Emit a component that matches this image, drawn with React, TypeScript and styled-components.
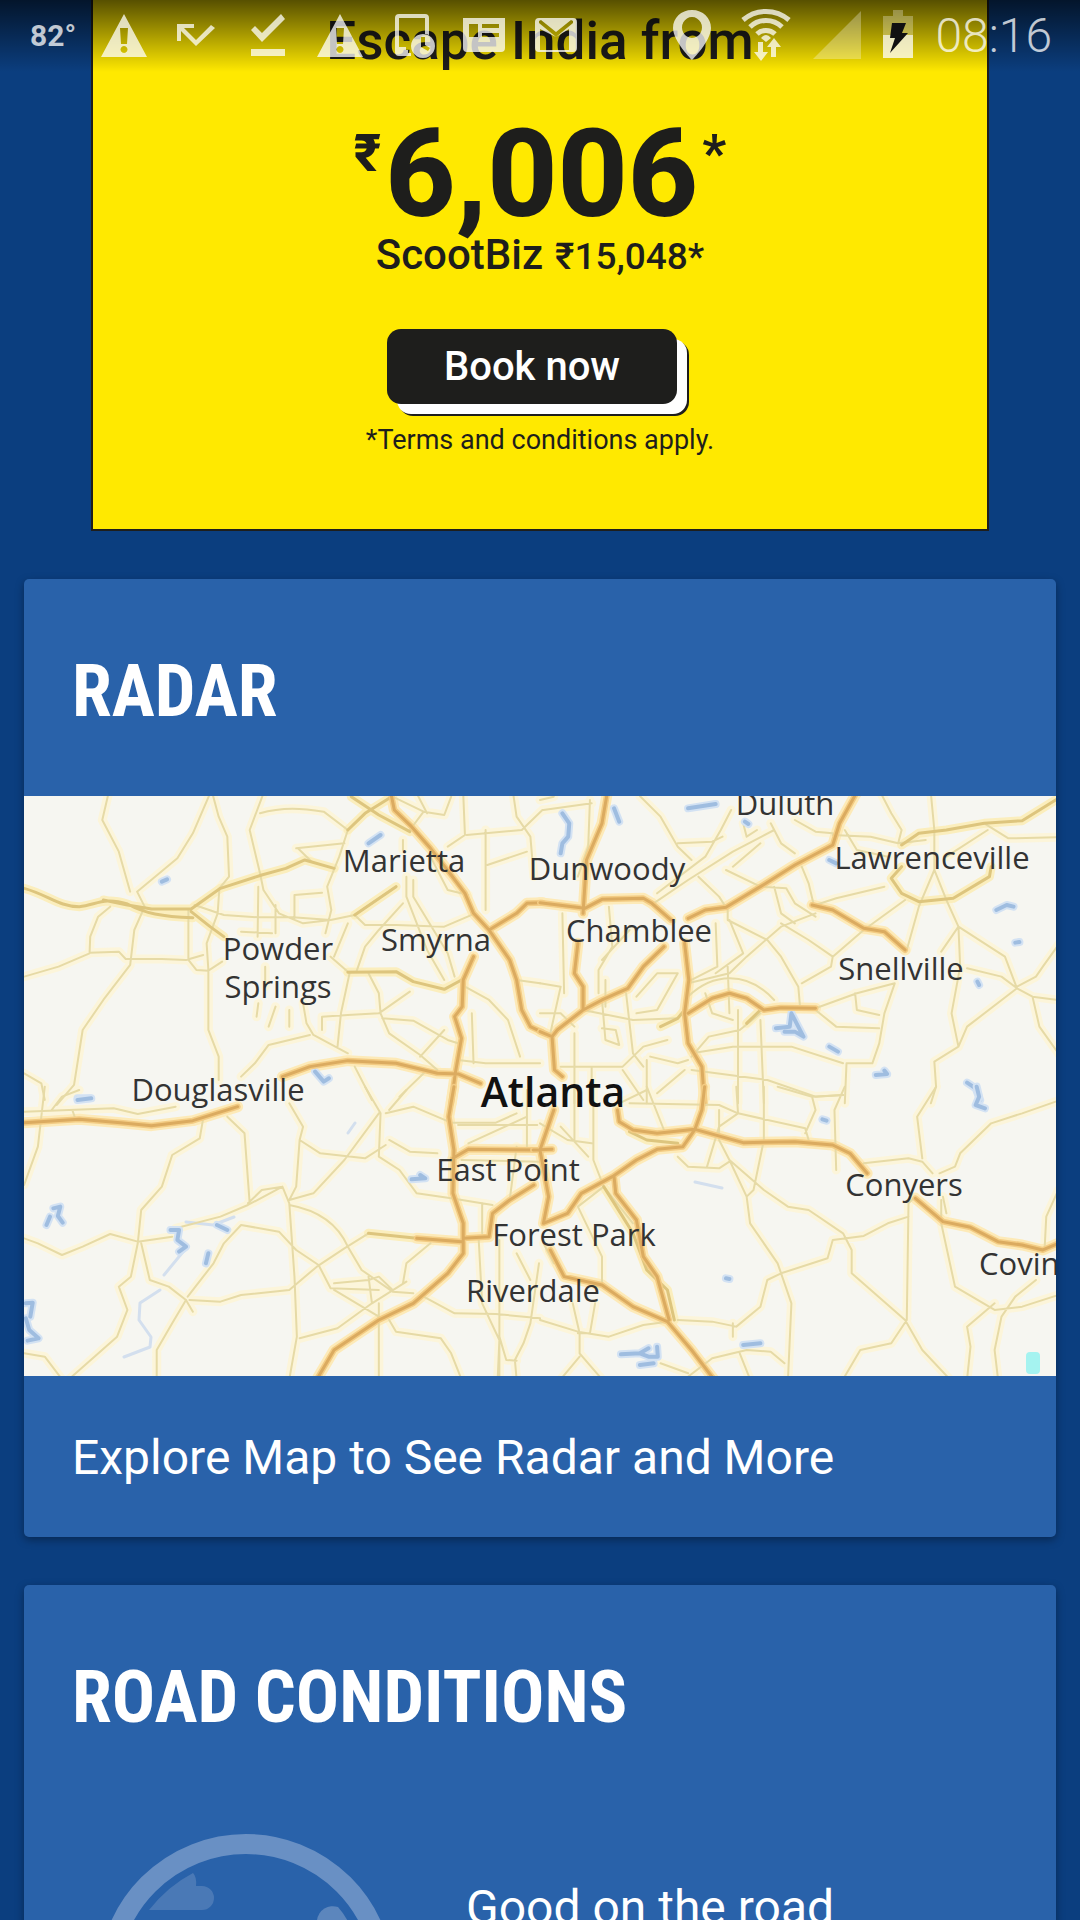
import React from "react";
import styled, { createGlobalStyle } from "styled-components";

const GlobalStyle = createGlobalStyle`
  * { box-sizing: border-box; }
  body { margin: 0; background: #0b3e7f; }
`;

const ink = "#1e1e1c";

const Screen = styled.div`
  position: relative;
  height: 100vh;
  overflow: hidden;
  background: #0b3e7f;
  font-family: Roboto, "Noto Sans", sans-serif;
  color: #fff;
`;

const StatusBar = styled.header`
  position: absolute;
  inset: 0 0 auto 0;
  z-index: 2;
  height: 72px;
  padding: 0 28px 0 30px;
  display: flex;
  justify-content: space-between;
  align-items: flex-start;
  background: linear-gradient(rgba(0, 0, 0, 0.66), rgba(0, 0, 0, 0));
  color: rgba(255, 255, 255, 0.75);
`;

const StatusGroup = styled.div<{ $gap: number }>`
  display: flex;
  align-items: center;
  gap: ${(p) => p.$gap}px;
  height: 72px;
`;

const Temperature = styled.span`
  width: 46px;
  font-size: 30px;
  font-weight: 700;
  line-height: 72px;
`;

const Clock = styled.time`
  font-size: 48px;
  font-weight: 300;
  line-height: 72px;
`;

const StatusIcon = styled.svg`
  display: block;
  flex: none;
  height: 72px;
  fill: currentColor;
`;

const Feed = styled.main`
  display: flex;
  flex-direction: column;
  gap: 48px;
  padding: 0 24px;
`;

const Ad = styled.section`
  align-self: center;
  width: 87%;
  padding: 9px 0 73px;
  display: flex;
  flex-direction: column;
  align-items: center;
  background: #ffe900;
  border: 2px solid ${ink};
  border-top: 0;
  color: ${ink};
`;

const AdHeadline = styled.p`
  margin: 0 0 44px;
  font-size: 53px;
  font-weight: 500;
  line-height: 64px;
`;

const Price = styled.p`
  margin: 0;
  display: flex;
  align-items: flex-start;
  gap: 4px;
  font-size: 122px;
  font-weight: 800;
  line-height: 116px;
`;

const PriceMark = styled.span`
  font-size: 52px;
  line-height: 74px;
`;

const BizFare = styled.p`
  margin: 0 0 50px;
  display: flex;
  align-items: baseline;
  gap: 12px;
  font-size: 42px;
  font-weight: 500;
  line-height: 44px;
`;

const BizPrice = styled.span`
  font-size: 37px;
`;

const BookButton = styled.button`
  width: 290px;
  height: 75px;
  margin: 0 16px 20px 0;
  border: 0;
  border-radius: 14px;
  background: ${ink};
  box-shadow: 10px 10px 0 #fff, 12px 12px 0 ${ink};
  color: #fff;
  font: 500 40px Roboto, sans-serif;
`;

const Terms = styled.p`
  margin: 0;
  font-size: 27px;
  line-height: 32px;
`;

const Card = styled.section`
  border-radius: 5px;
  overflow: hidden;
  background: #2962aa;
  box-shadow: 0 3px 8px rgba(0, 0, 0, 0.35);
`;

const CardTitle = styled.h2`
  margin: 0;
  padding: 69px 48px 60px;
  font-family: "Roboto Condensed", "Liberation Sans Narrow", "Arial Narrow", Roboto, sans-serif;
  font-size: 72px;
  font-weight: 700;
  line-height: 88px;
`;

const MapSvg = styled.svg`
  display: block;
  width: 100%;
  background: #f6f6f1;
`;

const CardLink = styled.a`
  display: block;
  padding: 54px 48px 51px;
  color: #fff;
  font-size: 48px;
  line-height: 56px;
  text-decoration: none;
`;

const RoadRow = styled.div`
  display: flex;
  align-items: flex-start;
  gap: 72px;
  padding: 32px 48px 48px 74px;
`;

const RoadIcon = styled.svg`
  flex: none;
  width: 296px;
  height: 296px;
`;

const RoadStatus = styled.p`
  margin: 46px 0 0;
  font-size: 48px;
  line-height: 56px;
`;

/* The map is drawn in four quadrants, each with its own local grid. */
type Quadrant = { at: string; minor: string; medium: string; major: string; water: string };

const quadrants: Quadrant[] = [
  {
    at: "translate(-24 -16) scale(.3444 .3333)",
    minor:
      "M315 40L297 120L345 215L378 335M610 40L560 160L515 235L398 335L420 380L390 450L378 555L300 660L240 750L215 915L165 975M618 45L635 110L660 170L665 290L637 325L632 400L600 490L605 570L605 750L635 830L635 900M765 40L725 150L755 280L765 330L810 400L880 430L960 420L1030 405L1150 320M755 100C820 80 880 85 940 95L1010 150L985 230L950 320L962 390L945 460M320 380L285 410L262 470L260 520L170 560L70 590M260 518L345 515L365 537L470 537L540 540L590 525M547 390L547 540L570 570L605 572L645 545M565 375L650 405L750 412L850 412L960 420M750 320L748 470M800 375L800 460M855 415L855 345L935 338M860 205L1000 190M865 205L905 245M1180 290L1180 350L1240 510L1290 600M1200 300L1200 350L1300 520L1320 590M1250 230L1300 330L1360 345M1030 405L1060 435L1150 435L1290 440L1380 400M1170 370L1100 450L1060 500L1035 575L1010 575L960 530M1015 580L990 700L980 800M1070 580L1100 640L1105 700L1130 760L1220 825L1270 870M935 750L935 710L1010 705L1100 700L1190 635M1110 715L1200 722L1300 780L1330 790M880 670L890 730L910 765L1010 820M700 890L740 850L780 795L900 765M1350 620L1420 660L1475 720L1510 830M1370 700L1375 850M1190 150L1230 95L1290 105L1310 50M1345 40L1350 165L1300 200M1355 165L1515 150L1575 90M1490 40L1500 110L1540 170L1550 290M1410 150L1410 390M1415 255L1530 215M1030 860L1080 960M1240 870L1160 950M70 880L120 910L130 960M1220 830L1290 750M1330 840L1410 850L1568 850M1500 600L1568 610M1010 430L970 530M770 560L770 620M800 680L780 740M750 670L745 710M840 690L840 740M700 455L790 460M1140 50L1230 95M1170 180L1170 210M1210 40L1240 100",
    medium:
      "M70 325C140 345 170 380 230 380C280 375 300 350 370 372C420 400 470 410 560 413M300 360L370 375L440 387L555 387L640 325L760 285L830 265L885 240L970 265M555 395L610 440L650 470M1020 50L1100 105L1190 155M1130 55L1060 100L1010 150M1010 577L1150 575L1200 605L1290 628L1340 600M1030 405L1150 320",
    major:
      "M1135 40L1145 90L1195 140L1250 205L1310 285L1350 340L1375 400L1420 450L1480 540L1500 600L1515 690L1540 740L1575 757M1420 450L1500 400L1530 370L1575 368M1375 530L1345 600L1342 680L1320 710L1340 775L1322 880L1310 970M820 890L900 860L1010 842L1150 850L1270 880L1330 882L1395 910",
    water: "M915 875L940 905L955 895M225 955L260 955M1070 190L1105 165M470 305L485 298",
  },
  {
    at: "translate(516 -16) scale(.3444 .3333)",
    minor:
      "M990 40L1020 100L1050 150L1040 190M1135 40L1145 150L1145 270L1100 380L1065 510M1145 270L1180 360L1215 440L1350 530L1385 625L1430 650L1505 660M1385 625L1240 740L1215 800L1145 845L1150 920L1135 970M1505 495L1460 560L1440 590L1385 620M1215 440L1220 560L1195 700L1215 800M1215 440L1165 515M1240 565L1340 590L1385 625M1430 650L1450 740L1505 820M1290 130L1360 175L1505 172M1180 230L1300 150M850 165L960 170L1040 190L1120 180M555 90L525 150L480 230L340 340M680 150L560 215L430 300L330 370M670 130L700 190L740 220M640 190L560 260M540 270L640 320L715 325L740 370L800 410M760 260L780 310L795 375M1060 360L940 450L850 530M545 390L545 420L660 480L700 530L750 620L755 680M550 420L590 520L510 580M800 400L700 440L600 530L550 580L430 610M700 430L780 480L850 530L845 560L760 610M290 48L350 110L400 200L440 240M400 190L500 185L530 170M1000 320L860 355L800 375M460 290L520 350L545 390M800 685L920 640L1030 610L1000 700L985 790L965 850L890 850L885 970M800 690L860 740L985 745M915 640L920 690L985 705M430 650C500 580 600 570 680 660M575 690L575 970M640 720L650 970M440 820L560 800L730 800L880 850M440 870L660 900L800 950L880 945M640 700L580 750L490 770L440 830M0 610L60 620L30 760M65 400L70 640M125 690L270 720L400 715M180 660L190 780L230 795L220 750L180 745M250 640L270 820L300 860M310 840L310 970M320 830L400 850L430 840M200 380L210 500L170 570L170 640M260 450L180 540M280 650L340 580L400 580L340 690L280 700M100 760L100 970M60 860L240 860L300 800L370 780M510 430L515 560L440 600M145 60L140 200L110 290M0 60L40 50M10 90L150 70M630 150L600 170L590 130M740 120L800 155L850 160M885 150L920 210L1010 230M680 320L700 400L740 430M480 640L500 700L560 720M545 560L550 700M190 600L190 680M0 700L60 700L100 740M150 860L150 970M240 870L300 960M340 940L420 870",
    medium:
      "M1050 195L1100 160L1180 150L1290 130L1400 122L1505 55M1310 260L1305 290L1200 355L1100 365L1050 340L1020 295L1050 260M600 730L640 690M350 740L400 715L420 690",
    major:
      "M195 40L180 130L135 240L125 400M0 368L130 385L180 358L300 355L325 370L380 420M430 415L480 390L540 382L640 320L740 255L850 195L870 130L918 40M110 490L100 580L125 620L125 690M360 500L300 560L255 625L180 660L125 690L50 750L35 770L42 870L65 890M0 755L35 770M420 490L432 600L420 700L430 790L470 860L478 970M430 700L500 655L550 640L600 655L650 690L700 683L800 685M790 375L850 390L940 445L1000 455L1060 510",
    water:
      "M65 100L85 130L82 170L65 190L60 220M215 85L230 125M430 85L510 72M685 745L725 740L730 700L745 730L765 770L740 755L710 755M840 800L865 815M1325 390L1355 375L1375 380M975 885L1008 882L1000 872M1240 908L1265 925L1278 960M595 125L605 132M1270 605L1275 615M840 240L860 250M1380 488L1392 486",
  },
  {
    at: "translate(-24 294) scale(.3444 .3333)",
    minor:
      "M130 -10L110 170L70 285M210 60L220 90M70 65L200 60L330 55L400 72L510 50M150 60L180 20L230 0M590 85L580 145L500 195L470 290L410 360L400 460L380 560L345 590L370 660L340 740L200 868M70 445L110 460L180 495L240 470L320 432L400 455L500 440M510 415L640 380L720 345L820 290L840 340L855 560L862 740L840 868M660 80L710 130L725 340M840 40L880 110L870 150L860 290L840 330M870 150L930 190L1060 205L1120 165M1060 -10L1105 70L1100 200L1160 240L1210 310L1310 325L1430 345M1100 70L1000 210L910 310L840 330M1120 70L1200 50L1310 98L1440 98L1500 70M840 345C920 360 980 400 1010 470L1050 540L1140 605L1200 610M410 460L435 570L490 590L540 630L560 665M550 630L640 635L700 615L840 600L920 530L1000 475L1070 430M545 620L620 520L650 460L700 405L810 425L860 480L925 525L960 595L1100 600M540 630L500 700L455 780L455 868M970 580L1070 570L1100 560L1140 600M1170 580L1180 520L1250 460M1100 640L1100 868M970 600L1100 680M1180 575L1080 640L980 715L870 745M1130 690L1150 725L1280 745L1310 790L1340 868M1230 620L1320 670L1440 672L1568 685M1390 450L1400 640L1450 750L1445 868M1450 450L1450 868M1500 490L1540 570M1565 520L1540 700L1520 760L1495 810L1500 868M1450 740L1470 810L1500 812M70 790L130 800L180 868M1130 150L1190 185L1270 190M1130 60L1180 0M1400 340L1400 430M1530 80L1360 160M1500 170L1480 330L1430 380M1330 105L1560 105M1530 0L1530 170M1070 560L1080 640M720 340L760 300L820 290M1340 210L1568 215",
    medium: "M1070 430L1210 445",
    major:
      "M70 98L230 88L350 98L440 107L560 92L690 50M1318 -10L1303 80L1318 180L1315 310L1345 400L1345 490L1300 550L1200 640L1100 690L970 780L920 868M1315 205L1360 178L1575 180M1345 445L1420 440L1430 370L1480 330L1550 285M1210 445L1340 455",
    water:
      "M135 405L145 380M155 355L175 350L168 378L182 398M495 420L520 420L515 450L540 470L520 485M605 490L598 520M75 640L95 638L88 680M75 685L85 720L112 745L80 752M1195 268L1235 265L1220 255M225 30L265 25M630 405L660 420",
  },
  {
    at: "translate(516 294) scale(.3444 .3333)",
    minor:
      "M155 -10L155 210L185 290L270 400M100 -10L100 150M940 220L1070 205L1110 215L1140 250M1150 -10L1095 80L1110 205M1505 32L1400 70L1310 100L1220 190L1205 230L1160 250M885 -10L855 60L860 240M790 20L800 60L770 130M570 -10L575 70L520 110L485 230M650 -10L650 150L620 300L600 320M690 -10L790 20L880 15M260 40L520 45L575 70L770 115L780 150M520 150L550 210L600 320L610 400L690 520L730 640L720 868M550 210L650 300L720 350L780 360L880 430L905 480L905 550L1060 690L1110 780L1190 868M1070 340L1065 690L1020 760L930 780L880 868M1070 380L1010 400L940 438L850 450L835 505L700 550L660 570L640 650L570 710L500 695L400 690M1165 330L1165 400L1205 590L1320 660L1400 650L1505 615M1440 570L1380 620L1340 680L1320 780L1330 868M1320 640L1240 710L1250 770L1240 868M1505 300L1470 380L1465 480M400 200L430 230L520 235L550 215M0 690L110 725L200 740L300 705L370 695M95 640L115 730L115 790L180 868M160 640L145 730L110 730M115 800L60 868M420 868L500 805L600 780L670 785L710 820M580 790L610 868M110 350L185 290M0 100L80 150L150 160M110 350L180 500L180 590M310 -10L360 120M520 60L520 140M1170 320L1180 370M1070 340L1090 320M230 40L310 0M10 460L40 520M350 820L430 850M560 700L560 740M60 110L140 200",
    medium: "M185 290L240 380L270 430L310 540L370 600L390 690M260 125L310 150L400 160",
    major:
      "M225 60L230 95L270 120L340 130L450 118L590 158L740 155L850 165L900 190L950 250M478 -10L470 60L450 118L415 170L340 178L280 210L210 260L120 310L80 370L10 400M1090 325L1170 395L1250 412L1330 455L1400 465L1460 480L1505 460M215 260L220 310L280 390L300 500L340 560L375 690M30 480L70 560L180 585L270 650L370 695L440 780L505 868M40 60L0 180L25 320L10 400M-20 180L35 178",
    water:
      "M1268 -10L1275 20L1265 45L1292 55M235 793L290 790L315 800L342 800L340 770M290 790L315 775M290 825L330 820M820 88L832 92M540 565L550 567M590 765L640 760",
  },
];

/* Narrow creeks, fainter than the lakes. */
const creeks =
  "M163 451L140 479M162 426L189 429L210 421M136 494L116 507L115 524L127 541L126 551L100 561M324 337L331 327M671 386L698 392";

type City = { name: string; x: number; y: number; start?: boolean };

const cities: City[] = [
  { name: "Duluth", x: 761, y: 19 },
  { name: "Marietta", x: 380, y: 76 },
  { name: "Dunwoody", x: 583, y: 84 },
  { name: "Lawrenceville", x: 908, y: 73 },
  { name: "Smyrna", x: 412, y: 155 },
  { name: "Chamblee", x: 615, y: 146 },
  { name: "Powder", x: 254, y: 164 },
  { name: "Springs", x: 254, y: 202 },
  { name: "Snellville", x: 877, y: 184 },
  { name: "Douglasville", x: 194, y: 305 },
  { name: "East Point", x: 484, y: 385 },
  { name: "Conyers", x: 880, y: 400 },
  { name: "Forest Park", x: 550, y: 450 },
  { name: "Riverdale", x: 509, y: 506 },
  { name: "Covin", x: 955, y: 479, start: true },
];

const Road = styled.path<{ $color: string; $width: number }>`
  fill: none;
  stroke: ${(p) => p.$color};
  stroke-width: ${(p) => p.$width}px;
  stroke-linejoin: round;
  stroke-linecap: round;
  vector-effect: non-scaling-stroke;
`;

const CityLabel = styled.text`
  fill: #333;
  font-family: "Open Sans", "Noto Sans", sans-serif;
  font-size: 31px;
`;

const MainCityLabel = styled(CityLabel)`
  fill: #111;
  font-size: 41px;
  font-weight: 600;
`;

function RadarMap() {
  return (
    <MapSvg viewBox="0 0 1032 580" role="img" aria-label="Map of Atlanta">
      {quadrants.map((q) => (
        <g key={q.at} transform={q.at}>
          <Road d={q.minor} $color="#fcf5da" $width={9} />
          <Road d={q.medium} $color="#fbeebd" $width={9} />
          <Road d={q.major} $color="#fdeab8" $width={11} />
        </g>
      ))}
      <Road d={creeks} $color="#d3dfee" $width={3} />
      {quadrants.map((q) => (
        <g key={q.at} transform={q.at}>
          <Road d={q.minor} $color="#e6daa6" $width={2} />
          <Road d={q.water} $color="#d3e2f3" $width={8} />
          <Road d={q.water} $color="#9fbde0" $width={4} />
          <Road d={q.medium} $color="#ddc57e" $width={3} />
          <Road d={q.major} $color="#f3cc84" $width={6} />
          <Road d={q.major} $color="#dbab60" $width={3} />
        </g>
      ))}
      <rect x="1002" y="556" width="14" height="22" rx="4" fill="#a5f3f0" />
      {cities.map((c) => (
        <CityLabel key={c.name} x={c.x} y={c.y} textAnchor={c.start ? "start" : "middle"}>
          {c.name}
        </CityLabel>
      ))}
      <MainCityLabel x="529" y="311" textAnchor="middle">
        Atlanta
      </MainCityLabel>
    </MapSvg>
  );
}

function WarningIcon() {
  return (
    <StatusIcon width="48" viewBox="0 0 48 72">
      <path
        fillRule="evenodd"
        d="M24 14L47 57H1ZM20 28L21 44H27L28 28ZM24 46a3.500 3.500 0 1 0 .01 0Z"
      />
    </StatusIcon>
  );
}

export default function App() {
  return (
    <Screen>
      <GlobalStyle />
      <StatusBar>
        <StatusGroup $gap={24}>
          <Temperature>82°</Temperature>
          <WarningIcon />
          <StatusIcon width="48" viewBox="0 0 48 72">
            <path d="M5 24H22V28H12L24 40L39 25L43 28L24 46L9 31V41H5Z" />
          </StatusIcon>
          <StatusIcon width="48" viewBox="0 0 48 72">
            <path d="M7 30L11 26L18 33L37 14L41 19L18 42ZM7 49H41V56H7Z" />
          </StatusIcon>
          <WarningIcon />
          <StatusIcon width="48" viewBox="0 0 48 72">
            <path
              fillRule="evenodd"
              d="M11 14H37Q41 14 41 18V35A12 12 0 0 0 37 34V18H11V47H18V50H20V53H23V56H11Q7 56 7 52V18Q7 14 11 14Z"
            />
            <path
              fillRule="evenodd"
              d="M35 34A12 12 0 1 1 34.990 34ZM33 37V47L40 51L42 48L37 45V37Z"
            />
          </StatusIcon>
          <StatusIcon width="48" viewBox="0 0 48 72">
            <path
              fillRule="evenodd"
              d="M3 18H45V48Q45 52 41 52H7Q3 52 3 48ZM9 24V37H18V24ZM22 24V28H39V24ZM22 33V37H39V33Z"
            />
          </StatusIcon>
          <StatusIcon width="48" viewBox="0 0 48 72">
            <path
              fillRule="evenodd"
              d="M7 18H41Q45 18 45 22V48Q45 52 41 52H7Q3 52 3 48V22Q3 18 7 18ZM9 20L24 32L39 20L41 21V23L24 37L7 23V21ZM8 29V50H37V29L24 37Z"
            />
          </StatusIcon>
        </StatusGroup>
        <StatusGroup $gap={22}>
          <StatusIcon width="46" viewBox="0 0 46 72">
            <path
              fillRule="evenodd"
              d="M19 10C8 10 0 18 0 28C0 41 19 60 19 60S38 41 38 28C38 18 30 10 19 10ZM19 17a10 10.500 0 1 1-.01 0Z"
            />
          </StatusIcon>
          <StatusIcon width="50" viewBox="0 0 50 72">
            <g fill="none" stroke="currentColor" strokeWidth="5">
              <path d="M2 20A35 35 0 0 1 48 20M9 27A23 23 0 0 1 41 27M16 34A13 13 0 0 1 34 34" />
            </g>
            <path d="M20 38Q25 32 30 38L25 42ZM17 42H22V52H27L20 61L13 52H17ZM33 38L40 47H35V57H30V47H26Z" />
          </StatusIcon>
          <StatusIcon width="48" viewBox="0 0 48 72">
            <path fillOpacity=".38" d="M48 11V59H0Z" />
          </StatusIcon>
          <StatusIcon width="30" viewBox="0 0 30 72">
            <path fillOpacity=".38" d="M10 10H20V16H30V35H0V16H10Z" />
            <path d="M0 35H30V58H0Z" />
            <path fill="#111" d="M9 23H23L19 33H25L7 53L12 38H7Z" />
          </StatusIcon>
          <Clock>08:16</Clock>
        </StatusGroup>
      </StatusBar>

      <Feed>
        <Ad>
          <AdHeadline>Escape India from</AdHeadline>
          <Price>
            <PriceMark>₹</PriceMark>
            6,006
            <PriceMark>*</PriceMark>
          </Price>
          <BizFare>
            ScootBiz <BizPrice>₹15,048*</BizPrice>
          </BizFare>
          <BookButton type="button">Book now</BookButton>
          <Terms>*Terms and conditions apply.</Terms>
        </Ad>

        <Card>
          <CardTitle>RADAR</CardTitle>
          <RadarMap />
          <CardLink href="#map">Explore Map to See Radar and More</CardLink>
        </Card>

        <Card>
          <CardTitle>ROAD CONDITIONS</CardTitle>
          <RoadRow>
            <RoadIcon viewBox="0 0 296 296">
              <circle cx="148" cy="148" r="138" fill="none" stroke="#6990c4" strokeWidth="20" />
              <path
                fill="#4a79b6"
                d="M51 76Q70 52 95 39Q99 43 98 52H104A12 12 0 0 1 104 76Z"
              />
              <path fill="#5c86bd" d="M219 86A16 16 0 0 1 240 73Q248 82 252 92H219Z" />
            </RoadIcon>
            <RoadStatus>Good on the road</RoadStatus>
          </RoadRow>
        </Card>
      </Feed>
    </Screen>
  );
}
